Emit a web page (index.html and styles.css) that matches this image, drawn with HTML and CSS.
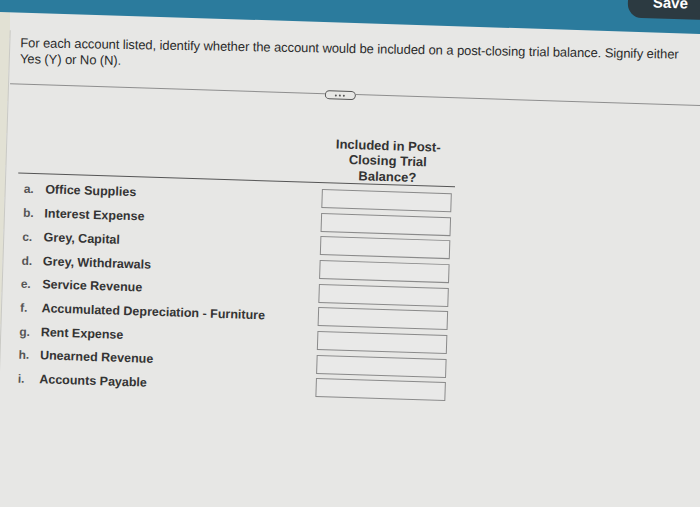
FILE: index.html
```html
<!DOCTYPE html>
<html lang="en">
<head>
<meta charset="utf-8">
<title>Post-closing trial balance</title>
<link rel="stylesheet" href="styles.css">
</head>
<body>
<div class="stage">
  <header class="topbar">
    <button class="save" type="button">Save</button>
  </header>
  <main class="content">
    <p class="instructions">For each account listed, identify whether the account would be included on a post-closing trial balance. Signify either Yes (Y) or No (N).</p>
    <div class="divider">
      <span class="rule rule-left"></span>
      <span class="pill"><i></i><i></i><i></i></span>
      <span class="rule rule-right"></span>
    </div>
    <section class="sheet">
      <div class="head">
        <span></span>
        <span class="head-title">Included in Post-Closing Trial Balance?</span>
      </div>
      <div class="rows">
        <div class="row"><span class="letter">a.</span><span class="name">Office Supplies</span><input class="box" type="text"></div>
        <div class="row"><span class="letter">b.</span><span class="name">Interest Expense</span><input class="box" type="text"></div>
        <div class="row"><span class="letter">c.</span><span class="name">Grey, Capital</span><input class="box" type="text"></div>
        <div class="row"><span class="letter">d.</span><span class="name">Grey, Withdrawals</span><input class="box" type="text"></div>
        <div class="row"><span class="letter">e.</span><span class="name">Service Revenue</span><input class="box" type="text"></div>
        <div class="row"><span class="letter">f.</span><span class="name">Accumulated Depreciation - Furniture</span><input class="box" type="text"></div>
        <div class="row"><span class="letter">g.</span><span class="name">Rent Expense</span><input class="box" type="text"></div>
        <div class="row"><span class="letter">h.</span><span class="name">Unearned Revenue</span><input class="box" type="text"></div>
        <div class="row"><span class="letter">i.</span><span class="name">Accounts Payable</span><input class="box" type="text"></div>
      </div>
    </section>
  </main>
</div>
</body>
</html>
```
FILE: styles.css
```css
html, body {
  margin: 0;
  padding: 0;
}
body {
  width: 700px;
  height: 507px;
  overflow: hidden;
  background: #e5e5e3;
  font-family: "Liberation Sans", Arial, sans-serif;
  color: #333;
}
.stage {
  width: 800px;
  height: 600px;
  margin: -40px 0 0 -40px;
  background: linear-gradient(to right, #e2e1d4 43px, #e7e7e5 43px);
  transform: rotate(1.8deg);
  transform-origin: 390px 290px;
}
.topbar {
  height: 62.5px;
  background: #2b7b9d;
  display: flex;
  justify-content: flex-end;
  align-items: flex-end;
  padding-right: 55px;
}
.save {
  width: 85px;
  height: 30px;
  margin-bottom: 14px;
  border: 0;
  border-radius: 14px;
  background: #2c3a41;
  color: #fff;
  font-family: "Liberation Sans", Arial, sans-serif;
  font-weight: bold;
  font-size: 15px;
  padding: 0 0 3px 0;
}
.content {
  margin-left: 43px;
  border-left: 1px solid #c9c9c4;
  padding-bottom: 200px;
}
.instructions {
  margin: 18.5px 0 0 0;
  padding-left: 10px;
  width: 672px;
  font-size: 13px;
  line-height: 16px;
  letter-spacing: -0.09px;
  color: #2b2b2b;
  transform: rotate(-0.8deg);
}
.divider {
  display: flex;
  align-items: center;
  margin: 16.5px 0 0 1px;
  height: 9px;
}
.rule {
  height: 1px;
  background: #8e8e8e;
}
.rule-left {
  width: 314.5px;
}
.rule-right {
  flex: 1;
}
.pill {
  width: 29px;
  height: 7px;
  border: 1px solid #555;
  border-radius: 5px;
  display: flex;
  align-items: center;
  justify-content: center;
  gap: 2px;
  margin-top: 3px;
}
.pill i {
  width: 2px;
  height: 2px;
  background: #555;
  border-radius: 1px;
}
.sheet {
  width: 437.5px;
  margin: 38px 0 0 11.5px;
}
.head {
  display: grid;
  grid-template-columns: 304.5px 130px;
  border-bottom: 1px solid #555;
}
.head-title {
  font-weight: bold;
  font-size: 13px;
  line-height: 15.5px;
  text-align: center;
  color: #333;
  padding: 0 5px;
}
.rows {
  margin-top: 3.6px;
}
.row {
  display: grid;
  grid-template-columns: 21.5px 276.5px 130px;
  align-items: center;
  height: 23.7px;
  padding-left: 6.5px;
}
.letter {
  font-weight: bold;
  font-size: 12px;
  color: #555;
}
.name {
  font-weight: bold;
  font-size: 12.5px;
  color: #343434;
}
.box {
  box-sizing: border-box;
  width: 130px;
  height: 19px;
  margin: 0;
  border: 1px solid #8a8a8a;
  background: #e9e9e8;
  padding: 0;
}
```
